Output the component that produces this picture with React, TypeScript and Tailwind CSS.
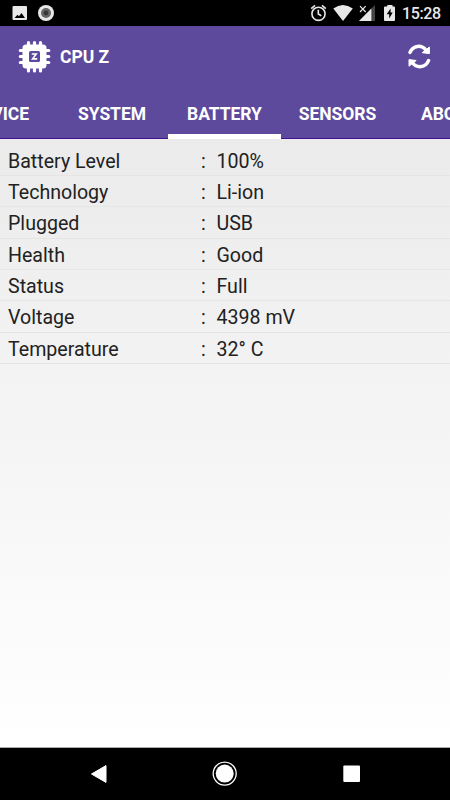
const rows = [
  ['Battery Level', '100%'],
  ['Technology', 'Li-ion'],
  ['Plugged', 'USB'],
  ['Health', 'Good'],
  ['Status', 'Full'],
  ['Voltage', '4398 mV'],
  ['Temperature', '32° C'],
];

function StatusBar() {
  return (
    <div className="flex h-[26px] shrink-0 items-center bg-black text-[#e8e8e8]">
      <svg className="ml-3 shrink-0" width="44" height="26" viewBox="0 0 44 26">
        <rect x="0.5" y="6" width="14.5" height="14" rx="1" fill="#e8e8e8" />
        <path d="M2.5 18 L5.5 14.7 L7 16.2 L9.5 13 L13 18Z" fill="#000" />
        <circle cx="34" cy="13" r="8" fill="#e8e8e8" />
        <circle cx="34" cy="13" r="5" fill="#666" />
        <circle cx="34" cy="13" r="2.4" fill="#383838" />
      </svg>
      <svg className="ml-auto shrink-0" width="92" height="26" viewBox="0 0 92 26">
        <g fill="none" stroke="#e8e8e8" strokeWidth="1.6">
          <circle cx="10.5" cy="13.8" r="6.6" />
          <path d="M3.2 8.7 L7 5.4 M17.8 8.7 L14 5.4 M10.3 9.8 V14 L13.3 15.8" />
        </g>
        <path d="M25.3 8.5 Q35 1.5 44.8 8.5 L35 21Z" fill="#e8e8e8" />
        <path d="M67 5 V21 H51Z" fill="#444" />
        <path d="M63.4 8.6 V21 H51Z" fill="#e8e8e8" />
        <path d="M52 6.2 L57.7 12 M57.7 6.2 L52 12" stroke="#000" strokeWidth="3" />
        <path d="M52 6.2 L57.7 12 M57.7 6.2 L52 12" stroke="#e8e8e8" strokeWidth="1.2" />
        <path d="M77 6.5 H79.3 V5 H84.5 V6.5 H86 Q87 6.5 87 7.5 V20 Q87 21 86 21 H77 Q76 21 76 20 V7.5 Q76 6.5 77 6.5Z" fill="#e8e8e8" />
        <path d="M82.6 8.5 L78.7 14.2 H81.2 V18.5 L84.7 12.6 H82.6Z" fill="#000" />
      </svg>
      <span className="ml-[2px] w-[48px] whitespace-nowrap pt-[1px] text-[16px] font-medium leading-[26px] tracking-[-0.4px]">15:28</span>
    </div>
  );
}

function ChipLogo() {
  return (
    <svg width="34" height="34" viewBox="0 0 34 34">
      <g stroke="#fff" strokeWidth="3.2" strokeLinecap="round">
        <path d="M10.5 2.5 V31 M16.5 2.5 V31 M22.5 2.5 V31" />
        <path d="M2.3 10.5 H30.8 M2.3 16.5 H30.8 M2.3 22.5 H30.8" />
      </g>
      <rect x="4.5" y="4.5" width="24" height="24" rx="3.5" fill="#fff" />
      <rect x="11" y="11" width="11" height="11" rx="1.5" fill="#5e4a9c" />
      <path d="M13.8 14 H18.2 L14.6 18.9 H19.2" fill="none" stroke="#fff" strokeWidth="1.6" />
    </svg>
  );
}

function Refresh() {
  return (
    <svg width="24" height="26" viewBox="0 0 24 26">
      <path d="M3 8.4 C6 1.3 14.5 0.3 19 6.3 M21.5 16.6 C18.5 23.7 10 24.7 5.5 18.7" fill="none" stroke="#fff" strokeWidth="3.5" strokeLinecap="round" />
      <path d="M22.4 3 V9.6 L15.2 8.7Z M2 22.2 V15.6 L9.2 16.5Z" fill="#fff" stroke="#fff" strokeWidth="1" strokeLinejoin="round" />
    </svg>
  );
}

export default function App() {
  return (
    <div className="flex h-[800px] w-[450px] flex-col overflow-hidden font-['Roboto',sans-serif]">
      <StatusBar />
      <header className="flex h-[113px] shrink-0 flex-col bg-[#5e4a9c] text-white">
        <div className="flex h-[62px] items-center pl-[18px] pr-[19px]">
          <ChipLogo />
          <h1 className="ml-[8px] text-[17.5px] font-bold leading-6">CPU Z</h1>
          <span className="ml-auto"><Refresh /></span>
        </div>
        <nav className="flex h-[51px] text-[17.5px] font-bold leading-[52px] tracking-[-0.05px]">
          <div className="flex w-[56px] shrink-0 justify-end overflow-hidden border-b border-[#43108f] pr-[27px]"><span>DEVICE</span></div>
          <div className="w-[112px] shrink-0 border-b border-[#43108f] text-center">SYSTEM</div>
          <div className="w-[113px] shrink-0 border-b-[5px] border-white text-center">BATTERY</div>
          <div className="w-[113px] shrink-0 border-b border-[#43108f] text-center">SENSORS</div>
          <div className="w-[56px] shrink-0 overflow-hidden border-b border-[#43108f] pl-[27px]">ABOUT</div>
        </nav>
      </header>
      <main className="h-[609px] shrink-0 border-b border-[#aaa] bg-gradient-to-b from-[#ebebeb] to-white pt-[5.8px]">
        {rows.map(([label, value]) => (
          <div key={label} className="flex h-[31.3px] border-b border-[#e5e5e5] pl-2 text-[19.6px] leading-[33px] text-[#212121]">
            <span className="w-[193px]">{label}</span>
            <span className="w-[15.5px]">:</span>
            <span>{value}</span>
          </div>
        ))}
      </main>
      <footer className="flex flex-1 bg-black">
        <svg width="450" height="52" viewBox="0 0 450 52" fill="#fff">
          <path d="M91.5 26 L106 17.6 V34.4Z" stroke="#fff" strokeWidth="1" strokeLinejoin="round" />
          <circle cx="224.7" cy="25.6" r="9" />
          <circle cx="224.7" cy="25.6" r="11.5" fill="none" stroke="#fff" strokeWidth="1.3" />
          <rect x="343.3" y="17.5" width="16.7" height="16.5" rx="1" />
        </svg>
      </footer>
    </div>
  );
}
